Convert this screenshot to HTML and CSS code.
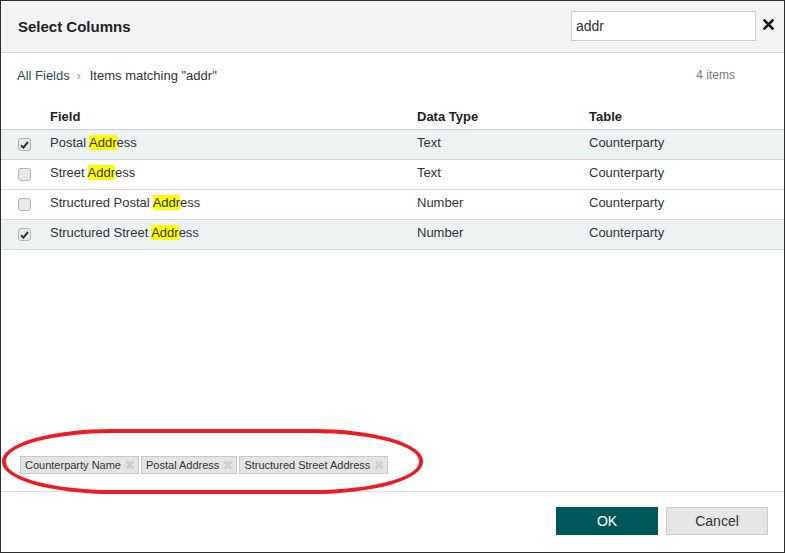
FILE: index.html
```html
<!DOCTYPE html>
<html>
<head>
<meta charset="utf-8">
<link rel="stylesheet" href="styles.css">
</head>
<body>
<div class="dialog">
  <div class="header">
    <div class="title">Select Columns</div>
    <input class="search" type="text" value="addr">
    <svg class="close" width="11" height="11" viewBox="0 0 11 11"><path d="M1.5 1.5 L9.5 9.5 M9.5 1.5 L1.5 9.5" stroke="#1a1a1a" stroke-width="2.6" stroke-linecap="square"/></svg>
  </div>
  <div class="content">
    <div class="crumbs">
      <span class="crumb-link">All Fields</span>
      <span class="crumb-sep">›</span>
      <span class="crumb-current">Items matching "addr"</span>
      <span class="count">4 items</span>
    </div>
    <div class="table">
      <div class="row head">
        <div class="cell"></div>
        <div class="cell">Field</div>
        <div class="cell">Data Type</div>
        <div class="cell">Table</div>
      </div>
      <div class="row selected">
        <div class="cell"><span class="cb checked"><svg width="9" height="8" viewBox="0 0 9 8"><path d="M1 4.2 L3.4 6.6 L8 1" stroke="#333" stroke-width="2" fill="none"/></svg></span></div>
        <div class="cell">Postal <mark>Addr</mark>ess</div>
        <div class="cell">Text</div>
        <div class="cell">Counterparty</div>
      </div>
      <div class="row">
        <div class="cell"><span class="cb"></span></div>
        <div class="cell">Street <mark>Addr</mark>ess</div>
        <div class="cell">Text</div>
        <div class="cell">Counterparty</div>
      </div>
      <div class="row">
        <div class="cell"><span class="cb"></span></div>
        <div class="cell">Structured Postal <mark>Addr</mark>ess</div>
        <div class="cell">Number</div>
        <div class="cell">Counterparty</div>
      </div>
      <div class="row selected">
        <div class="cell"><span class="cb checked"><svg width="9" height="8" viewBox="0 0 9 8"><path d="M1 4.2 L3.4 6.6 L8 1" stroke="#333" stroke-width="2" fill="none"/></svg></span></div>
        <div class="cell">Structured Street <mark>Addr</mark>ess</div>
        <div class="cell">Number</div>
        <div class="cell">Counterparty</div>
      </div>
    </div>
    <div class="tags">
      <span class="tag">Counterparty Name<svg class="tag-x" width="10" height="10" viewBox="0 0 10 10"><path d="M1.5 1.5 L8.5 8.5 M8.5 1.5 L1.5 8.5" stroke="#cfcfcf" stroke-width="3"/></svg></span>
      <span class="tag">Postal Address<svg class="tag-x" width="10" height="10" viewBox="0 0 10 10"><path d="M1.5 1.5 L8.5 8.5 M8.5 1.5 L1.5 8.5" stroke="#cfcfcf" stroke-width="3"/></svg></span>
      <span class="tag">Structured Street Address<svg class="tag-x" width="10" height="10" viewBox="0 0 10 10"><path d="M1.5 1.5 L8.5 8.5 M8.5 1.5 L1.5 8.5" stroke="#cfcfcf" stroke-width="3"/></svg></span>
    </div>
  </div>
  <div class="footer">
    <button class="btn ok">OK</button>
    <button class="btn cancel">Cancel</button>
  </div>
  <div class="annotation"></div>
</div>
</body>
</html>
```

FILE: styles.css
```css
* { box-sizing: border-box; }
html, body { margin: 0; padding: 0; background: #fff; }
body {
  font-family: "Liberation Sans", Arial, sans-serif;
  font-size: 13px;
  color: #333;
}
.dialog {
  position: relative;
  width: 785px;
  height: 553px;
  border: 1px solid #2e2e2e;
  display: flex;
  flex-direction: column;
  background: #fff;
}
.header {
  height: 52px;
  flex: none;
  background: #f3f3f3;
  border-bottom: 1px solid #d6d6d6;
  display: flex;
  align-items: center;
  padding: 0 10px 0 17px;
}
.title {
  font-size: 15px;
  font-weight: bold;
  color: #222;
  flex: 1;
}
.search {
  width: 185px;
  height: 30px;
  border: 1px solid #d0d0d0;
  background: #fff;
  font-family: "Liberation Sans", Arial, sans-serif;
  font-size: 14px;
  color: #333;
  padding: 0 4px;
  margin: 0 7px 1px 0;
  outline: none;
}
.close { display: block; margin-bottom: 4px; }
.content {
  flex: 1;
  display: flex;
  flex-direction: column;
}
.crumbs {
  margin-top: 13px;
  height: 18px;
  display: flex;
  align-items: center;
  padding: 0 49px 0 16px;
}
.crumb-link { color: #2f4b5a; }
.crumb-sep { color: #999; margin: 0 9px 0 7px; font-size: 12px; padding-top: 2px; }
.crumb-current { color: #333; flex: 1; }
.count { color: #777; font-size: 12px; }
.table { margin-top: 19px; }
.row {
  display: grid;
  grid-template-columns: 49px 367px 172px 1fr;
  height: 30px;
  border-bottom: 1px solid #dadada;
  align-items: center;
  padding-bottom: 4px;
}
.row.head {
  height: 27px;
  border-bottom: 1px solid #c9d7da;
  font-weight: bold;
  color: #222;
  padding-bottom: 0;
}
.row.selected { background: #edf3f3; }
.cell { white-space: nowrap; }
mark { background: #ffff00; color: #333; }
.cb {
  display: flex;
  align-items: center;
  justify-content: center;
  width: 13px;
  height: 13px;
  margin-left: 17px;
  margin-top: 4px;
  border: 1px solid #b4b4b4;
  border-radius: 3px;
  background: #e9e9e9;
}
.tags {
  margin-top: auto;
  padding: 0 0 17px 19px;
  display: flex;
  gap: 2px;
}
.tag {
  display: flex;
  align-items: center;
  height: 18px;
  padding: 0 3px 0 4px;
  background: #e4e4e4;
  border: 1px solid #c8c8c8;
  font-size: 11px;
  color: #333;
}
.tag-x { margin-left: 4px; }
.footer {
  height: 61px;
  flex: none;
  border-top: 1px solid #dedede;
  display: flex;
  justify-content: flex-end;
  align-items: center;
  padding: 0 16px 2px 0;
  gap: 8px;
}
.btn {
  width: 102px;
  height: 28px;
  font-family: "Liberation Sans", Arial, sans-serif;
  font-size: 14px;
  border: 1px solid transparent;
  cursor: pointer;
}
.btn.ok { background: #00575a; color: #fff; border-color: #00575a; }
.btn.cancel { background: #e6e6e6; color: #333; border-color: #cdcdcd; }
.annotation {
  position: absolute;
  left: 1px;
  top: 428px;
  width: 421px;
  height: 65px;
  border: 4px solid #ed1c24;
  border-radius: 110px / 32px;
  pointer-events: none;
}
```
